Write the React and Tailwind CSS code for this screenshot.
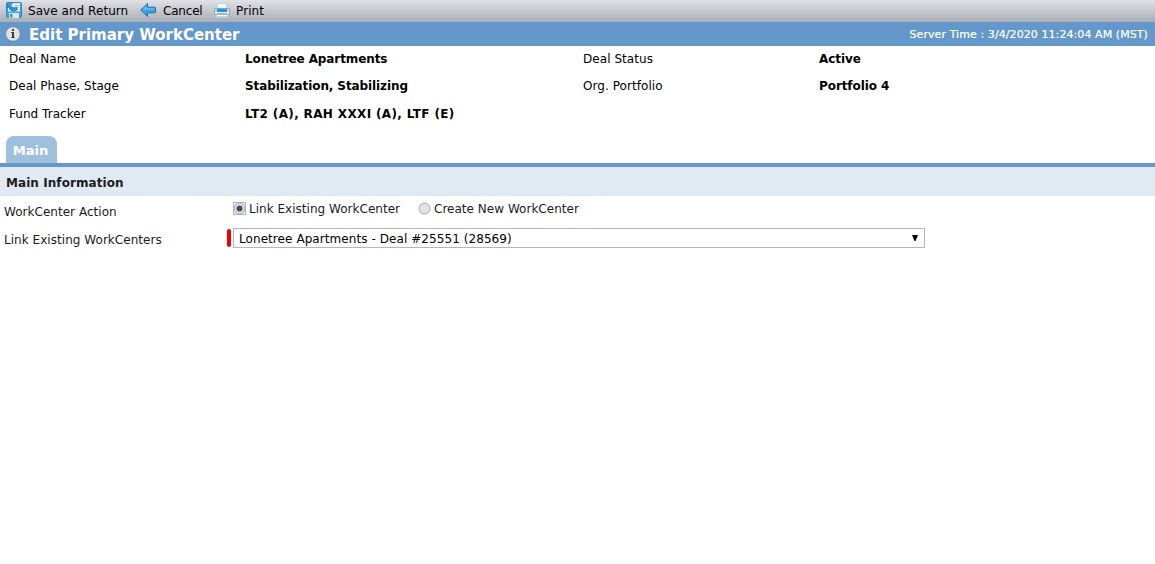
import React, { useState } from "react";

const dealRows = [
  {
    label: "Deal Name",
    value: "Lonetree Apartments",
    tracking: "tracking-[-0.11px]",
    label2: "Deal Status",
    value2: "Active",
  },
  {
    label: "Deal Phase, Stage",
    value: "Stabilization, Stabilizing",
    tracking: "tracking-[-0.1px]",
    label2: "Org. Portfolio",
    value2: "Portfolio 4",
  },
  {
    label: "Fund Tracker",
    value: "LT2 (A), RAH XXXI (A), LTF (E)",
    tracking: "tracking-[0.36px]",
  },
];

const SaveIcon = () => (
  <svg className="w-4 h-4 shrink-0" viewBox="0 0 16 16">
    <rect x="0.5" y="0.5" width="15" height="15" rx="1" fill="#3fa3df" stroke="#3089c4" />
    <path d="M2 1h12v8.5H2z" fill="#e2eef5" />
    <path d="M8.5 3.5H13M10 5.5h3" stroke="#9fbfd4" />
    <path d="M3 11h10v5H3z" fill="#dbe7ef" />
    <path d="M4 12h2.5v3.5H4z" fill="#3a93ca" />
    <path d="M1 1h6L5.2 3.2C6 5.5 8 6 10.5 4.5L12 7.5C8.5 10.8 3.8 9.8 2.7 5.5L1 7z" fill="#2387c8" />
    <path d="M2 2h2.8L3.9 3.3C4.3 6.8 7 8.4 10 7" fill="none" stroke="#4eabe2" />
  </svg>
);

const CancelIcon = () => (
  <svg className="w-4 h-4 shrink-0" viewBox="0 0 16 16">
    <path
      d="M.7 8 7.5 1.5v3.7h7.2q.8 0 .8.8v4q0 .8-.8.8H7.5v3.7z"
      fill="#36a2df"
      stroke="#2472a8"
      strokeLinejoin="round"
    />
    <path d="M2.5 7.7 6.6 3.8v2.4h7.7v1.5z" fill="#70c0ec" />
  </svg>
);

const PrintIcon = () => (
  <svg className="w-4 h-4 shrink-0" viewBox="0 0 16 16">
    <path d="M.5 6.5h15v6H.5z" fill="#cdd7e2" stroke="#96a9bd" />
    <path d="M3.5 1.5h9V7h-9z" fill="#f2f7fa" stroke="#bfd0dc" />
    <path d="M3 6h10v4H3z" fill="#2796db" />
    <path d="M3 6.5h10" stroke="#62b5e8" />
    <path d="M1 10h14v1.5H1z" fill="#edf3f8" />
    <path d="M3 12h10l1 3.5H2z" fill="#f3f9fd" />
    <path d="M3 12h10" stroke="#4e82a8" />
    <path d="M2 15h12" stroke="#93bad5" />
  </svg>
);

const InfoIcon = () => (
  <svg className="w-4 h-4 shrink-0" viewBox="0 0 16 16">
    <circle cx="8" cy="8" r="7.3" fill="#e2e2e2" stroke="#75818d" strokeWidth="0.8" />
    <path d="M7 3h2v2H7zM6 6h3v5.2h1V12H6v-.8h1V7H6z" fill="#3d3d3d" />
  </svg>
);

const Radio = ({ checked, onChange, label }) => (
  <label className="flex items-center h-4">
    <input type="radio" name="action" className="sr-only" checked={checked} onChange={onChange} />
    <svg className="w-4 h-4 shrink-0" viewBox="0 0 16 16">
      {checked && <rect x="0.5" y="1.5" width="12" height="12" fill="#edf3ff" stroke="#9dbdf2" />}
      <circle cx="6.5" cy="7.5" r="5.5" fill="#e2e2e2" stroke="#a6a6a6" />
      {checked && <circle cx="6.5" cy="7.5" r="3" fill="#4c4c4c" />}
    </svg>
    <span>{label}</span>
  </label>
);

const App = () => {
  const [action, setAction] = useState("link");

  return (
    <div className="min-h-screen bg-white text-[#1c1c1c] text-xs leading-4 font-['DejaVu_Sans',Verdana,sans-serif] whitespace-nowrap overflow-hidden">
      {/* Toolbar */}
      <div className="flex items-start h-[22px] pl-[6px] pt-[2px] bg-linear-to-b from-[#e0e2e6] to-[#a9adb5] text-black">
        <button className="flex gap-[6px] w-[134px]">
          <SaveIcon />
          <span className="pt-px tracking-[0.05px]">Save and Return</span>
        </button>
        <button className="flex gap-[7px] w-[74px]">
          <CancelIcon />
          <span className="pt-px tracking-[-0.2px]">Cancel</span>
        </button>
        <button className="flex gap-[6px]">
          <PrintIcon />
          <span className="pt-px tracking-[0.1px]">Print</span>
        </button>
      </div>

      {/* Title */}
      <div className="flex items-center h-6 pl-[5px] pr-[7px] bg-[#6497ca] text-white">
        <InfoIcon />
        <h1 className="ml-2 pt-px text-[15px] font-bold">Edit Primary WorkCenter</h1>
        <span className="ml-auto pt-px text-[11px] tracking-[0.08px] [-webkit-text-stroke:0.2px_white]">
          Server Time : 3/4/2020 11:24:04 AM (MST)
        </span>
      </div>

      {/* Deal summary */}
      <div className="h-[90px] pl-[9px] pt-[5px] text-black">
        {dealRows.map((row) => (
          <div key={row.label} className="flex h-[27.4px]">
            <span className="w-[236px] tracking-[0.04px]">{row.label}</span>
            <span className={`w-[338px] font-bold ${row.tracking}`}>{row.value}</span>
            <span className="w-[236px] tracking-[0.06px]">{row.label2}</span>
            <span className="font-bold tracking-[-0.08px]">{row.value2}</span>
          </div>
        ))}
      </div>

      {/* Tabs */}
      <div className="h-[31px] pl-[6px] border-b-4 border-[#6497ca]">
        <button className="block w-[51px] h-[27px] pt-[2px] pr-[2px] rounded-t-lg bg-[#9fbfdf] text-white text-[13px] font-bold">
          Main
        </button>
      </div>

      <h2 className="h-[29px] pl-[6px] leading-[32px] bg-[#e1e9f3] font-bold tracking-[0.07px]">
        Main Information
      </h2>

      <div className="flex h-[29px] pt-[5px]">
        <span className="w-[233px] pl-[4px] pt-[3px] tracking-[0.03px]">WorkCenter Action</span>
        <div className="flex tracking-[0.02px]">
          <div className="w-[185px]">
            <Radio
              label="Link Existing WorkCenter"
              checked={action === "link"}
              onChange={() => setAction("link")}
            />
          </div>
          <Radio
            label="Create New WorkCenter"
            checked={action === "new"}
            onChange={() => setAction("new")}
          />
        </div>
      </div>

      <div className="flex pt-[3px]">
        <span className="w-[227px] pl-[4px] pt-[4px] tracking-[0.04px]">Link Existing WorkCenters</span>
        <span className="w-[4px] h-[18px] mt-px mr-[2px] rounded-sm bg-[#f50000]"></span>
        <div className="flex items-center justify-between w-[692px] h-5 pl-[5px] pr-[6px] border border-[#b5b5b5] text-black">
          <span className="pt-px tracking-[0.07px]">Lonetree Apartments - Deal #25551 (28569)</span>
          <svg className="w-[6px] h-[6px]" viewBox="0 0 6 6">
            <path d="M0 0h6L3.5 6h-1z" fill="#000" />
          </svg>
        </div>
      </div>
    </div>
  );
};

export default App;
